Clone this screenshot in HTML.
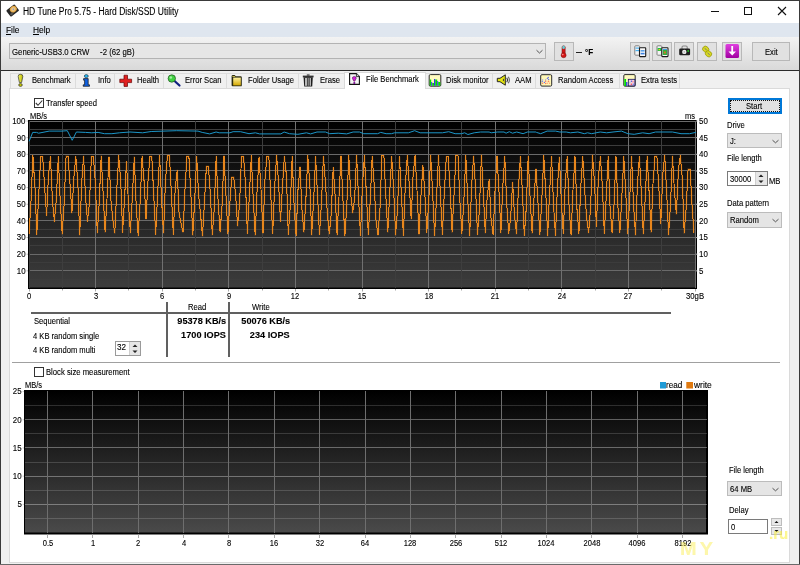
<!DOCTYPE html>
<html><head><meta charset="utf-8"><style>
html,body{margin:0;padding:0;width:800px;height:565px;overflow:hidden;background:#f0f0f0;}
body{position:relative;font-family:"Liberation Sans", sans-serif;}
.t{position:absolute;white-space:pre;line-height:1;transform-origin:0 0;font-family:"Liberation Sans", sans-serif;-webkit-text-stroke:0.12px currentColor;}
svg{position:absolute;left:0;top:0;}
</style></head><body>

<div style="position:absolute;left:0px;top:0px;width:800px;height:23px;background:#fff;"></div>
<div style="position:absolute;left:0px;top:23px;width:800px;height:14px;background:#dfe6ef;"></div>
<div style="position:absolute;left:0px;top:37px;width:800px;height:33px;background:linear-gradient(#f3f3f3,#d9d9d9);"></div>
<div style="position:absolute;left:0px;top:70px;width:800px;height:1px;background:#2b2b2b;"></div>
<div class="t" style="left:22.80px;top:6.62px;font-size:10px;transform:scaleX(0.848);color:#000;font-weight:normal;">HD Tune Pro 5.75 - Hard Disk/SSD Utility</div>
<svg width="800" height="23" style="left:0;top:0">
<line x1="711" y1="11.5" x2="719" y2="11.5" stroke="#111" stroke-width="1"/>
<rect x="744.5" y="7.5" width="7" height="7" fill="none" stroke="#111" stroke-width="1"/>
<path d="M778 7 L786 15 M786 7 L778 15" stroke="#111" stroke-width="1.1"/>
</svg>
<svg width="18" height="18" style="left:4px;top:2px" viewBox="4 2 18 18">
<defs><radialGradient id="dg" cx="0.5" cy="0.5" r="0.5"><stop offset="0.2" stop-color="#f8d8a0"/><stop offset="1" stop-color="#d89830"/></radialGradient></defs>
<g transform="rotate(-38 12.6 10.6)">
<rect x="7.4" y="6.6" width="10.6" height="8" rx="1" fill="#262626"/>
<ellipse cx="14" cy="10" rx="3.6" ry="3.2" fill="url(#dg)"/>
<circle cx="14" cy="10" r="0.9" fill="#9aa0b0"/>
<rect x="8.4" y="11.6" width="3" height="2" fill="#555"/>
</g></svg>
<div class="t" style="left:6.00px;top:24.87px;font-size:9.6px;transform:scaleX(0.8718750000000002);color:#000;font-weight:normal;">File</div>
<div class="t" style="left:32.50px;top:24.87px;font-size:9.6px;transform:scaleX(0.8718750000000002);color:#000;font-weight:normal;">Help</div>
<div style="position:absolute;left:6px;top:34px;width:5px;height:1px;background:#000;"></div>
<div style="position:absolute;left:33px;top:34px;width:6px;height:1px;background:#000;"></div>
<div style="position:absolute;left:9px;top:43px;width:537px;height:16px;box-sizing:border-box;border:1px solid #b3b3b3;background:#e6e6e6;"></div>
<div class="t" style="left:11.70px;top:46.57px;font-size:9.6px;transform:scaleX(0.8109375000000001);color:#000;font-weight:normal;">Generic-USB3.0 CRW     -2 (62 gB)</div>
<svg width="10" height="6" style="left:535px;top:48.8px"><path d="M1.5 1.2 L4.5 4 L7.5 1.2" fill="none" stroke="#444" stroke-width="0.9"/></svg>
<div style="position:absolute;left:554px;top:42px;width:20px;height:19px;box-sizing:border-box;border:1px solid #b8b8b8;background:#e1e1e1;"></div>
<svg width="20" height="19" style="left:554px;top:42px" viewBox="554 42 20 19">
<rect x="562" y="45.8" width="3.2" height="8.5" rx="1.5" fill="#d41818" stroke="#701010" stroke-width="0.5"/>
<rect x="562.3" y="45.8" width="2.6" height="3.2" rx="1.3" fill="#60d0d8"/>
<circle cx="563.6" cy="55.2" r="2.5" fill="#d41818" stroke="#701010" stroke-width="0.5"/>
<circle cx="562.8" cy="54.6" r="0.8" fill="#ff9090"/>
</svg>
<div style="position:absolute;left:576px;top:51.6px;width:6px;height:1.2px;background:#222;"></div>
<div class="t" style="left:584.50px;top:47.54px;font-size:9px;transform:scaleX(0.9);color:#000;font-weight:bold;">°F</div>
<div style="position:absolute;left:630px;top:42px;width:20px;height:19px;box-sizing:border-box;border:1px solid #b8b8b8;background:#e1e1e1;"></div>
<div style="position:absolute;left:652px;top:42px;width:20px;height:19px;box-sizing:border-box;border:1px solid #b8b8b8;background:#e1e1e1;"></div>
<div style="position:absolute;left:674px;top:42px;width:20px;height:19px;box-sizing:border-box;border:1px solid #b8b8b8;background:#e1e1e1;"></div>
<div style="position:absolute;left:697px;top:42px;width:20px;height:19px;box-sizing:border-box;border:1px solid #b8b8b8;background:#e1e1e1;"></div>
<div style="position:absolute;left:722px;top:42px;width:20px;height:19px;box-sizing:border-box;border:1px solid #b8b8b8;background:#e1e1e1;"></div>
<svg width="20" height="19" style="left:630px;top:42px" viewBox="630 42 20 19">
<rect x="634.8" y="45.8" width="4.8" height="9.4" rx="0.8" fill="#f4f4f4" stroke="#777" stroke-width="0.9"/>
<rect x="635.5" y="47.5" width="3.5" height="1.2" fill="#4ab0f0"/><rect x="635.5" y="50" width="3.5" height="1.2" fill="#4ab0f0"/>
<rect x="639.5" y="47.8" width="6.2" height="8.8" rx="0.6" fill="#fafafa" stroke="#1a1a1a" stroke-width="1.1"/>
<rect x="640.6" y="50" width="4" height="1.6" fill="#5aa0e8"/><rect x="640.6" y="52.8" width="4" height="1.6" fill="#3a80e0"/>
</svg>
<svg width="20" height="19" style="left:652px;top:42px" viewBox="652 42 20 19">
<rect x="657" y="45.8" width="4.8" height="9.4" rx="0.8" fill="#f4f4f4" stroke="#777" stroke-width="0.9"/>
<rect x="657.6" y="48" width="3.6" height="3" fill="#20c040"/><rect x="658.5" y="49" width="1.5" height="1.2" fill="#e0d020"/>
<rect x="661.8" y="47.8" width="6.2" height="8.8" rx="0.6" fill="#fafafa" stroke="#1a1a1a" stroke-width="1.1"/>
<rect x="662.8" y="50" width="4.2" height="5" fill="#30b040"/><rect x="663.8" y="51.5" width="2" height="2" fill="#e07020"/>
<rect x="662.8" y="49" width="4.2" height="1" fill="#40a0e0"/>
</svg>
<svg width="20" height="19" style="left:674px;top:42px" viewBox="674 42 20 19">
<path d="M682 49 V47.2 Q682 46 683.2 46 H686 Q687.2 46 687.2 47.2 V49" fill="none" stroke="#888" stroke-width="1.1"/>
<rect x="679.2" y="48.6" width="10.9" height="6.6" rx="1.2" fill="#1e1e1e"/>
<circle cx="684.3" cy="51.9" r="2.2" fill="#f0f0f0"/>
<circle cx="684.3" cy="51.9" r="0.9" fill="#bbb"/>
<rect x="687.4" y="50.2" width="1.6" height="1.6" fill="#20d020"/>
</svg>
<svg width="20" height="19" style="left:697px;top:42px" viewBox="697 42 20 19">
<g transform="rotate(40 707 51.3)">
<rect x="701.5" y="47.8" width="6.4" height="5.5" rx="2.6" fill="#d8d820" stroke="#8a8a00" stroke-width="0.6"/>
<rect x="706.6" y="49.5" width="6.4" height="5.5" rx="2.6" fill="#d8d820" stroke="#8a8a00" stroke-width="0.6"/>
<line x1="703.2" y1="50.5" x2="706" y2="50.5" stroke="#777" stroke-width="0.9"/>
<line x1="708.5" y1="52.2" x2="711.3" y2="52.2" stroke="#777" stroke-width="0.9"/>
</g></svg>
<svg width="20" height="19" style="left:722px;top:42px" viewBox="0 0 20 19">
<defs><linearGradient id="pg" x1="0" y1="0" x2="0" y2="1"><stop offset="0" stop-color="#e040e0"/><stop offset="1" stop-color="#a000a0"/></linearGradient></defs>
<rect x="3.5" y="2" width="13.5" height="14" rx="1.5" fill="url(#pg)"/>
<path d="M10.2 4 V12" stroke="#fff" stroke-width="1.8"/>
<path d="M6.5 9.5 L10.2 13.5 L14 9.5 Z" fill="#fff"/>
</svg>
<div style="position:absolute;left:752px;top:42px;width:38px;height:19px;box-sizing:border-box;border:1px solid #b8b8b8;background:#e1e1e1;"></div>
<div class="t" style="left:764.50px;top:46.87px;font-size:9.6px;transform:scaleX(0.796875);color:#000;font-weight:normal;">Exit</div>
<div style="position:absolute;left:9px;top:88px;width:781px;height:475px;box-sizing:border-box;border:1px solid #dadada;background:#fff;"></div>
<div style="position:absolute;left:10px;top:73px;width:65px;height:15px;box-sizing:border-box;border:1px solid #dcdcdc;border-right:none;border-bottom:none;background:#f0f0f0;"></div>
<div class="t" style="left:32.00px;top:74.97px;font-size:9.6px;transform:scaleX(0.796875);color:#000;font-weight:normal;">Benchmark</div>
<div style="position:absolute;left:75px;top:73px;width:39px;height:15px;box-sizing:border-box;border:1px solid #dcdcdc;border-right:none;border-bottom:none;background:#f0f0f0;"></div>
<div class="t" style="left:97.50px;top:74.97px;font-size:9.6px;transform:scaleX(0.796875);color:#000;font-weight:normal;">Info</div>
<div style="position:absolute;left:114px;top:73px;width:49px;height:15px;box-sizing:border-box;border:1px solid #dcdcdc;border-right:none;border-bottom:none;background:#f0f0f0;"></div>
<div class="t" style="left:137.20px;top:74.97px;font-size:9.6px;transform:scaleX(0.796875);color:#000;font-weight:normal;">Health</div>
<div style="position:absolute;left:163px;top:73px;width:63px;height:15px;box-sizing:border-box;border:1px solid #dcdcdc;border-right:none;border-bottom:none;background:#f0f0f0;"></div>
<div class="t" style="left:185.30px;top:74.97px;font-size:9.6px;transform:scaleX(0.796875);color:#000;font-weight:normal;">Error Scan</div>
<div style="position:absolute;left:226px;top:73px;width:72px;height:15px;box-sizing:border-box;border:1px solid #dcdcdc;border-right:none;border-bottom:none;background:#f0f0f0;"></div>
<div class="t" style="left:248.30px;top:74.97px;font-size:9.6px;transform:scaleX(0.796875);color:#000;font-weight:normal;">Folder Usage</div>
<div style="position:absolute;left:298px;top:73px;width:46px;height:15px;box-sizing:border-box;border:1px solid #dcdcdc;border-right:none;border-bottom:none;background:#f0f0f0;"></div>
<div class="t" style="left:320.40px;top:74.97px;font-size:9.6px;transform:scaleX(0.796875);color:#000;font-weight:normal;">Erase</div>
<div style="position:absolute;left:344px;top:72px;width:82px;height:17px;box-sizing:border-box;border:1px solid #d9d9d9;border-bottom:none;background:#fff;"></div>
<div class="t" style="left:366.00px;top:74.47px;font-size:9.6px;transform:scaleX(0.7921874999999999);color:#000;font-weight:normal;">File Benchmark</div>
<div style="position:absolute;left:425px;top:73px;width:67px;height:15px;box-sizing:border-box;border:1px solid #dcdcdc;border-right:none;border-bottom:none;background:#f0f0f0;"></div>
<div class="t" style="left:445.50px;top:74.97px;font-size:9.6px;transform:scaleX(0.796875);color:#000;font-weight:normal;">Disk monitor</div>
<div style="position:absolute;left:492px;top:73px;width:43px;height:15px;box-sizing:border-box;border:1px solid #dcdcdc;border-right:none;border-bottom:none;background:#f0f0f0;"></div>
<div class="t" style="left:514.50px;top:74.97px;font-size:9.6px;transform:scaleX(0.796875);color:#000;font-weight:normal;">AAM</div>
<div style="position:absolute;left:535px;top:73px;width:84px;height:15px;box-sizing:border-box;border:1px solid #dcdcdc;border-right:none;border-bottom:none;background:#f0f0f0;"></div>
<div class="t" style="left:557.60px;top:74.97px;font-size:9.6px;transform:scaleX(0.796875);color:#000;font-weight:normal;">Random Access</div>
<div style="position:absolute;left:619px;top:73px;width:60px;height:15px;box-sizing:border-box;border:1px solid #dcdcdc;border-right:none;border-bottom:none;background:#f0f0f0;"></div>
<div class="t" style="left:640.50px;top:74.97px;font-size:9.6px;transform:scaleX(0.796875);color:#000;font-weight:normal;">Extra tests</div>
<div style="position:absolute;left:679px;top:73px;width:1px;height:15px;background:#dcdcdc;"></div>
<svg width="800" height="20" style="left:0;top:72px" viewBox="0 72 800 20">
<defs>
<linearGradient id="yg" x1="0" y1="0" x2="1" y2="0"><stop offset="0" stop-color="#f5f560"/><stop offset="1" stop-color="#b8b800"/></linearGradient>
<linearGradient id="tg" x1="0" y1="0" x2="1" y2="0"><stop offset="0" stop-color="#555"/><stop offset="0.4" stop-color="#ddd"/><stop offset="1" stop-color="#444"/></linearGradient>
<linearGradient id="fg" x1="0" y1="0" x2="0" y2="1"><stop offset="0" stop-color="#fff2a0"/><stop offset="1" stop-color="#d4a800"/></linearGradient>
</defs>
<!-- benchmark exclamation -->
<path d="M18.2 76.5 Q18 74.3 20.5 74.3 Q23 74.3 22.8 76.5 L21.6 82.5 L19.4 82.5 Z" fill="url(#yg)" stroke="#333" stroke-width="0.7"/>
<ellipse cx="20.5" cy="85" rx="1.8" ry="1.4" fill="#c8c800" stroke="#333" stroke-width="0.7"/>
<!-- info i -->
<ellipse cx="86.3" cy="76.1" rx="2" ry="1.5" fill="#28b8f0" stroke="#123" stroke-width="0.6"/>
<path d="M83.6 78.6 H88.2 V84.8 H89.5 V86.3 H83.2 V84.8 H84.6 V80.2 H83.6 Z" fill="#1060e0" stroke="#111" stroke-width="0.7"/>
<!-- health cross -->
<path d="M124 75.2 H127.5 V79.2 H131.6 V82.6 H127.5 V86.4 H124 V82.6 H119.8 V79.2 H124 Z" fill="#e02020" stroke="#600" stroke-width="0.7"/>
<!-- error scan magnifier -->
<line x1="174" y1="80.5" x2="179.5" y2="85.5" stroke="#102080" stroke-width="2.2" stroke-linecap="round"/>
<circle cx="171.8" cy="78.5" r="3.7" fill="#40d040" stroke="#205020" stroke-width="0.7"/>
<circle cx="170.8" cy="77.5" r="1.3" fill="#a0f0a0"/>
<!-- folder -->
<path d="M231.6 76.2 Q231.6 74.9 233 74.9 L234.6 74.9 L235.8 76.2 L240.6 76.2 Q241.8 76.2 241.8 77.5 L241.8 85.4 Q241.8 86.3 240.8 86.3 L232.6 86.3 Q231.6 86.3 231.6 85.3 Z" fill="#2a2a10" />
<path d="M232.4 76.2 L234.8 76.2 L235.4 77 L232.4 77 Z" fill="#f0e060"/>
<rect x="233.2" y="77.6" width="7.6" height="7.8" fill="url(#fg)"/>
<!-- trash -->
<path d="M302.8 75.6 H313.6 V77.4 H302.8 Z" fill="#333"/>
<rect x="306.8" y="74.3" width="2.8" height="1.6" fill="#555"/>
<path d="M303.6 77.3 H312.8 L312.2 86.4 H304.2 Z" fill="#1e1e1e"/>
<rect x="305.2" y="78" width="1.6" height="7.8" fill="#e0e0e0"/>
<rect x="307.6" y="78" width="1.2" height="7.8" fill="#9a9a9a"/>
<rect x="309.6" y="78" width="1.3" height="7.8" fill="#c8c8c8"/>
<!-- file benchmark doc -->
<path d="M349.6 73.6 H356.4 L359.4 76.6 V84.4 H349.6 Z" fill="#f6f6f6" stroke="#111" stroke-width="1.1"/>
<path d="M356.4 73.6 V76.6 H359.4" fill="#ccc" stroke="#111" stroke-width="0.8"/>
<path d="M354.3 76.4 Q356.6 76.6 356.2 78.4 L354.8 81.2 H353.8 L352.4 78.4 Q352 76.6 354.3 76.4 Z" fill="#d020d8" stroke="#401040" stroke-width="0.5"/>
<ellipse cx="354.3" cy="83" rx="1.1" ry="0.9" fill="#7a0a90"/>
<!-- disk monitor -->
<rect x="429.2" y="74.6" width="11.6" height="11.6" rx="1.2" fill="#fffbc0" stroke="#2a2a2a" stroke-width="1"/>
<path d="M429.7 79.5 H431.2 V85.7 H429.7 Z M432.2 83 H434 V85.7 H432.2 Z M435.2 79.5 H437.2 V85.7 H435.2 Z M438.2 82 H440.3 V85.7 H438.2 Z" fill="#00e000"/>
<path d="M431.2 82 H432.2 V85.7 H431.2 Z M434 79 H435.2 V85.7 H434 Z M437.2 81 H438.2 V85.7 H437.2 Z" fill="#3535e8"/>
<!-- AAM speaker -->
<path d="M497.3 78.3 H500 L505.3 74.8 V85.2 L500 81.7 H497.3 Z" fill="#e4e410" stroke="#222" stroke-width="1"/>
<ellipse cx="503.5" cy="80" rx="0.6" ry="1.2" fill="#444"/>
<path d="M506.8 77.8 Q508.3 80 506.8 82.2" fill="none" stroke="#333" stroke-width="1.1"/>
<path d="M508.3 76.8 Q510.5 80 508.3 83.2" fill="none" stroke="#666" stroke-width="1.1"/>
<!-- random access -->
<rect x="540.7" y="74.7" width="11" height="11.4" rx="1.2" fill="#fff8b8" stroke="#2a2a2a" stroke-width="1"/>
<rect x="542.3" y="79" width="0.8" height="3" fill="#9aa0f0"/><rect x="545.3" y="79" width="0.8" height="3" fill="#9aa0f0"/>
<circle cx="548.3" cy="77.4" r="0.7" fill="#6670e8"/><circle cx="547.4" cy="78.4" r="0.7" fill="#6670e8"/><circle cx="548.6" cy="79.4" r="0.7" fill="#6670e8"/>
<circle cx="544.4" cy="82.4" r="0.7" fill="#6670e8"/><circle cx="542.2" cy="81.5" r="0.6" fill="#6670e8"/>
<circle cx="542.6" cy="83.3" r="0.8" fill="#ff8060"/><circle cx="545.6" cy="81.2" r="0.8" fill="#ff8060"/>
<circle cx="545.6" cy="83.5" r="0.8" fill="#ff8060"/><circle cx="548.5" cy="81.4" r="0.8" fill="#ff8060"/>
<circle cx="547.2" cy="83.3" r="0.7" fill="#ff9a70"/><circle cx="549.5" cy="83.2" r="0.7" fill="#ff9a70"/>
<!-- extra tests -->
<rect x="623.8" y="74.6" width="11.4" height="11.6" rx="1.2" fill="#fffbc0" stroke="#2a2a2a" stroke-width="1"/>
<rect x="624.3" y="79" width="1.8" height="7" fill="#00e000"/>
<rect x="626.1" y="82" width="1.3" height="4" fill="#3535e8"/>
<rect x="628.3" y="79.3" width="6.6" height="6.6" fill="#f4d0e0" stroke="#101060" stroke-width="0.8"/>
<circle cx="631.5" cy="81.2" r="0.8" fill="#4a60f0"/><circle cx="629.8" cy="82.6" r="0.8" fill="#a0f0b0"/>
<circle cx="631.4" cy="84.3" r="0.8" fill="#ff5050"/><circle cx="633.3" cy="84.3" r="0.8" fill="#6a80f0"/><circle cx="633" cy="81.8" r="0.7" fill="#ff8080"/>
</svg>
<div style="position:absolute;left:34px;top:98px;width:10px;height:10px;box-sizing:border-box;border:1px solid #333;background:#fff;"></div>
<svg width="10" height="10" style="left:34px;top:98px"><path d="M1.8 5 L4 7.3 L8.3 2.5" fill="none" stroke="#333" stroke-width="1.1"/></svg>
<div class="t" style="left:46.00px;top:97.87px;font-size:9.6px;transform:scaleX(0.7940625);color:#000;font-weight:normal;">Transfer speed</div>
<svg width="800" height="300" style="left:0;top:0">
<defs><linearGradient id="bg1" x1="0" y1="0" x2="0" y2="1"><stop offset="0" stop-color="#000"/><stop offset="1" stop-color="#3d3d3d"/></linearGradient><linearGradient id="bg2unused" x1="0" y1="0" x2="0" y2="1"><stop offset="0" stop-color="#000"/><stop offset="1" stop-color="#4a4a4a"/></linearGradient></defs>
<rect x="28" y="120" width="669" height="169" fill="#000"/>
<rect x="29" y="121" width="666" height="166.5" fill="url(#bg1)"/>
<line x1="29" y1="279.50" x2="696" y2="279.50" stroke="#3c3c3c" stroke-width="1"/>
<line x1="29" y1="270.50" x2="696" y2="270.50" stroke="#6a6a6a" stroke-width="1"/>
<line x1="29" y1="262.50" x2="696" y2="262.50" stroke="#3c3c3c" stroke-width="1"/>
<line x1="29" y1="254.50" x2="696" y2="254.50" stroke="#6a6a6a" stroke-width="1"/>
<line x1="29" y1="245.50" x2="696" y2="245.50" stroke="#3c3c3c" stroke-width="1"/>
<line x1="29" y1="237.50" x2="696" y2="237.50" stroke="#6a6a6a" stroke-width="1"/>
<line x1="29" y1="229.50" x2="696" y2="229.50" stroke="#3c3c3c" stroke-width="1"/>
<line x1="29" y1="220.50" x2="696" y2="220.50" stroke="#6a6a6a" stroke-width="1"/>
<line x1="29" y1="212.50" x2="696" y2="212.50" stroke="#3c3c3c" stroke-width="1"/>
<line x1="29" y1="204.50" x2="696" y2="204.50" stroke="#6a6a6a" stroke-width="1"/>
<line x1="29" y1="195.50" x2="696" y2="195.50" stroke="#3c3c3c" stroke-width="1"/>
<line x1="29" y1="187.50" x2="696" y2="187.50" stroke="#6a6a6a" stroke-width="1"/>
<line x1="29" y1="179.50" x2="696" y2="179.50" stroke="#3c3c3c" stroke-width="1"/>
<line x1="29" y1="170.50" x2="696" y2="170.50" stroke="#6a6a6a" stroke-width="1"/>
<line x1="29" y1="162.50" x2="696" y2="162.50" stroke="#3c3c3c" stroke-width="1"/>
<line x1="29" y1="154.50" x2="696" y2="154.50" stroke="#6a6a6a" stroke-width="1"/>
<line x1="29" y1="145.50" x2="696" y2="145.50" stroke="#3c3c3c" stroke-width="1"/>
<line x1="29" y1="137.50" x2="696" y2="137.50" stroke="#6a6a6a" stroke-width="1"/>
<line x1="29" y1="129.50" x2="696" y2="129.50" stroke="#3c3c3c" stroke-width="1"/>
<line x1="29" y1="121.50" x2="696" y2="121.50" stroke="#6a6a6a" stroke-width="1"/>
<line x1="29.50" y1="121" x2="29.50" y2="288" stroke="#3e3e3e" stroke-width="1"/>
<line x1="62.50" y1="121" x2="62.50" y2="288" stroke="#3e3e3e" stroke-width="1"/>
<line x1="95.50" y1="121" x2="95.50" y2="288" stroke="#707070" stroke-width="1"/>
<line x1="128.50" y1="121" x2="128.50" y2="288" stroke="#3e3e3e" stroke-width="1"/>
<line x1="162.50" y1="121" x2="162.50" y2="288" stroke="#707070" stroke-width="1"/>
<line x1="195.50" y1="121" x2="195.50" y2="288" stroke="#3e3e3e" stroke-width="1"/>
<line x1="228.50" y1="121" x2="228.50" y2="288" stroke="#707070" stroke-width="1"/>
<line x1="262.50" y1="121" x2="262.50" y2="288" stroke="#3e3e3e" stroke-width="1"/>
<line x1="295.50" y1="121" x2="295.50" y2="288" stroke="#707070" stroke-width="1"/>
<line x1="328.50" y1="121" x2="328.50" y2="288" stroke="#3e3e3e" stroke-width="1"/>
<line x1="362.50" y1="121" x2="362.50" y2="288" stroke="#707070" stroke-width="1"/>
<line x1="395.50" y1="121" x2="395.50" y2="288" stroke="#3e3e3e" stroke-width="1"/>
<line x1="428.50" y1="121" x2="428.50" y2="288" stroke="#707070" stroke-width="1"/>
<line x1="461.50" y1="121" x2="461.50" y2="288" stroke="#3e3e3e" stroke-width="1"/>
<line x1="495.50" y1="121" x2="495.50" y2="288" stroke="#707070" stroke-width="1"/>
<line x1="528.50" y1="121" x2="528.50" y2="288" stroke="#3e3e3e" stroke-width="1"/>
<line x1="561.50" y1="121" x2="561.50" y2="288" stroke="#707070" stroke-width="1"/>
<line x1="595.50" y1="121" x2="595.50" y2="288" stroke="#3e3e3e" stroke-width="1"/>
<line x1="628.50" y1="121" x2="628.50" y2="288" stroke="#707070" stroke-width="1"/>
<line x1="661.50" y1="121" x2="661.50" y2="288" stroke="#3e3e3e" stroke-width="1"/>
<line x1="695.50" y1="121" x2="695.50" y2="288" stroke="#707070" stroke-width="1"/>
<line x1="26.5" y1="270.85" x2="28" y2="270.85" stroke="#bbb" stroke-width="1"/>
<line x1="696" y1="270.85" x2="697.5" y2="270.85" stroke="#bbb" stroke-width="1"/>
<line x1="26.5" y1="254.20" x2="28" y2="254.20" stroke="#bbb" stroke-width="1"/>
<line x1="696" y1="254.20" x2="697.5" y2="254.20" stroke="#bbb" stroke-width="1"/>
<line x1="26.5" y1="237.55" x2="28" y2="237.55" stroke="#bbb" stroke-width="1"/>
<line x1="696" y1="237.55" x2="697.5" y2="237.55" stroke="#bbb" stroke-width="1"/>
<line x1="26.5" y1="220.90" x2="28" y2="220.90" stroke="#bbb" stroke-width="1"/>
<line x1="696" y1="220.90" x2="697.5" y2="220.90" stroke="#bbb" stroke-width="1"/>
<line x1="26.5" y1="204.25" x2="28" y2="204.25" stroke="#bbb" stroke-width="1"/>
<line x1="696" y1="204.25" x2="697.5" y2="204.25" stroke="#bbb" stroke-width="1"/>
<line x1="26.5" y1="187.60" x2="28" y2="187.60" stroke="#bbb" stroke-width="1"/>
<line x1="696" y1="187.60" x2="697.5" y2="187.60" stroke="#bbb" stroke-width="1"/>
<line x1="26.5" y1="170.95" x2="28" y2="170.95" stroke="#bbb" stroke-width="1"/>
<line x1="696" y1="170.95" x2="697.5" y2="170.95" stroke="#bbb" stroke-width="1"/>
<line x1="26.5" y1="154.30" x2="28" y2="154.30" stroke="#bbb" stroke-width="1"/>
<line x1="696" y1="154.30" x2="697.5" y2="154.30" stroke="#bbb" stroke-width="1"/>
<line x1="26.5" y1="137.65" x2="28" y2="137.65" stroke="#bbb" stroke-width="1"/>
<line x1="696" y1="137.65" x2="697.5" y2="137.65" stroke="#bbb" stroke-width="1"/>
<line x1="26.5" y1="121.00" x2="28" y2="121.00" stroke="#bbb" stroke-width="1"/>
<line x1="696" y1="121.00" x2="697.5" y2="121.00" stroke="#bbb" stroke-width="1"/>
<line x1="29.50" y1="289" x2="29.50" y2="291.5" stroke="#aaa" stroke-width="1"/>
<line x1="62.50" y1="289" x2="62.50" y2="290.5" stroke="#aaa" stroke-width="1"/>
<line x1="95.50" y1="289" x2="95.50" y2="291.5" stroke="#aaa" stroke-width="1"/>
<line x1="128.50" y1="289" x2="128.50" y2="290.5" stroke="#aaa" stroke-width="1"/>
<line x1="162.50" y1="289" x2="162.50" y2="291.5" stroke="#aaa" stroke-width="1"/>
<line x1="195.50" y1="289" x2="195.50" y2="290.5" stroke="#aaa" stroke-width="1"/>
<line x1="228.50" y1="289" x2="228.50" y2="291.5" stroke="#aaa" stroke-width="1"/>
<line x1="262.50" y1="289" x2="262.50" y2="290.5" stroke="#aaa" stroke-width="1"/>
<line x1="295.50" y1="289" x2="295.50" y2="291.5" stroke="#aaa" stroke-width="1"/>
<line x1="328.50" y1="289" x2="328.50" y2="290.5" stroke="#aaa" stroke-width="1"/>
<line x1="362.50" y1="289" x2="362.50" y2="291.5" stroke="#aaa" stroke-width="1"/>
<line x1="395.50" y1="289" x2="395.50" y2="290.5" stroke="#aaa" stroke-width="1"/>
<line x1="428.50" y1="289" x2="428.50" y2="291.5" stroke="#aaa" stroke-width="1"/>
<line x1="461.50" y1="289" x2="461.50" y2="290.5" stroke="#aaa" stroke-width="1"/>
<line x1="495.50" y1="289" x2="495.50" y2="291.5" stroke="#aaa" stroke-width="1"/>
<line x1="528.50" y1="289" x2="528.50" y2="290.5" stroke="#aaa" stroke-width="1"/>
<line x1="561.50" y1="289" x2="561.50" y2="291.5" stroke="#aaa" stroke-width="1"/>
<line x1="595.50" y1="289" x2="595.50" y2="290.5" stroke="#aaa" stroke-width="1"/>
<line x1="628.50" y1="289" x2="628.50" y2="291.5" stroke="#aaa" stroke-width="1"/>
<line x1="661.50" y1="289" x2="661.50" y2="290.5" stroke="#aaa" stroke-width="1"/>
<line x1="695.50" y1="289" x2="695.50" y2="291.5" stroke="#aaa" stroke-width="1"/>
<polyline points="29.1,141.3 32.7,132.4 36.5,132.4 38.6,133.2 49.2,131.1 62.0,131.1 67.3,130.7 72.2,140.3 76.4,132.0 85.4,132.4 91.7,132.8 98.1,132.4 104.5,133.7 111.9,133.7 119.4,132.8 130.0,132.0 142.7,132.8 151.2,131.5 164.0,131.1 176.7,130.7 198.0,131.1 202.2,132.4 209.7,133.9 216.1,132.0 219.2,132.8 229.9,132.8 233.1,131.7 240.5,131.7 249.0,133.7 255.4,132.8 259.6,133.9 280.9,133.9 284.1,132.0 289.4,133.7 297.9,134.3 306.4,132.8 310.6,133.9 317.0,132.0 325.5,132.0 329.7,133.7 338.2,133.2 346.7,133.9 353.1,132.0 359.5,132.0 363.7,133.7 368.0,133.7 377.6,133.7 380.7,132.4 386.1,133.7 391.4,133.7 394.6,132.8 408.4,132.8 414.7,130.7 420.1,132.8 442.4,132.8 448.7,131.7 455.1,133.7 461.5,133.7 464.7,132.8 467.9,134.5 474.2,132.8 480.6,132.0 489.1,132.0 491.2,132.8 497.6,132.0 504.0,132.0 506.1,133.2 509.3,131.7 512.5,133.2 516.7,132.0 523.1,133.7 527.4,132.0 535.9,132.0 536.5,132.4 540.7,133.7 547.1,131.1 555.6,131.1 559.9,132.0 566.2,132.0 570.5,132.8 577.9,132.0 584.3,133.7 587.5,132.8 591.7,133.7 600.2,132.0 606.6,132.8 613.0,132.0 621.5,131.1 627.9,133.7 634.2,134.3 642.7,132.8 649.1,133.7 655.5,132.0 672.5,132.0 681.0,133.7 689.5,133.7 695.9,132.4" fill="none" stroke="#1c96c8" stroke-width="1" stroke-linejoin="round"/>
<polyline points="29.0,233.9 30.9,203.3 32.9,155.8 34.9,185.6 36.8,234.3 38.8,192.9 40.7,156.7 42.7,156.7 44.6,186.7 46.6,215.3 48.5,174.9 50.5,157.0 52.4,200.1 54.4,221.4 56.3,199.5 58.3,156.9 60.2,200.4 62.2,233.9 64.1,204.3 66.1,156.0 68.0,156.0 70.0,184.0 71.9,212.7 73.9,177.1 75.8,156.7 77.8,182.3 79.7,235.0 81.7,182.9 83.6,156.2 85.6,198.3 87.5,221.1 89.5,202.9 91.4,156.4 93.4,156.4 95.3,182.2 97.3,232.8 99.2,202.8 101.2,156.1 103.1,192.8 105.1,232.0 107.0,199.0 109.0,156.8 110.9,200.2 112.9,220.0 114.8,233.0 116.8,189.0 118.7,155.6 120.7,180.6 122.6,232.2 124.6,197.3 126.5,161.9 128.5,204.6 130.4,232.7 132.4,195.3 134.3,157.0 136.3,208.2 138.2,235.6 140.2,200.8 142.1,156.3 144.1,181.5 146.0,218.8 148.0,180.9 149.9,156.6 151.8,156.6 153.8,196.3 155.7,234.1 157.7,192.3 159.6,155.4 161.6,200.5 163.5,233.0 165.5,180.7 167.4,155.6 169.4,155.6 171.3,191.5 173.3,234.2 175.2,188.7 177.2,170.6 179.1,213.4 181.1,223.8 183.0,232.3 185.0,189.6 186.9,156.2 188.9,156.2 190.8,193.1 192.8,235.1 194.7,199.6 196.7,156.7 198.6,194.4 200.6,215.0 202.5,235.9 204.5,202.1 206.4,166.2 208.4,166.2 210.3,193.1 212.3,234.6 214.2,209.3 216.2,156.6 218.1,201.3 220.1,231.9 222.0,206.1 224.0,156.1 225.9,193.8 227.9,233.7 229.8,203.5 231.8,177.0 233.7,177.0 235.7,195.9 237.6,225.8 239.6,203.8 241.5,156.5 243.5,156.5 245.4,181.7 247.4,233.2 249.3,196.3 251.3,155.9 253.2,197.9 255.2,234.9 257.1,189.8 259.1,157.0 261.0,189.2 263.0,233.3 264.9,180.9 266.9,156.4 268.8,156.4 270.8,195.4 272.7,233.3 274.7,186.6 276.6,155.4 278.6,183.6 280.5,221.1 282.5,185.4 284.4,156.6 286.4,175.0 288.3,234.3 290.3,206.0 292.2,156.5 294.2,208.0 296.1,235.4 298.1,187.5 300.0,167.0 302.0,210.0 303.9,231.9 305.9,199.2 307.8,155.8 309.8,183.5 311.7,234.7 313.7,199.4 315.6,156.7 317.6,196.7 319.5,234.3 321.5,202.2 323.4,156.6 325.4,181.6 327.3,213.2 329.3,233.8 331.2,214.6 333.2,167.8 335.1,194.8 337.1,234.6 339.0,196.7 341.0,156.0 342.9,199.2 344.9,235.7 346.8,204.9 348.8,155.5 350.7,194.0 352.7,212.8 354.6,198.6 356.6,155.4 358.5,196.7 360.5,235.6 362.4,186.2 364.4,155.6 366.3,192.0 368.3,234.4 370.2,201.5 372.2,156.5 374.1,183.7 376.1,221.9 378.0,234.8 380.0,208.5 381.9,155.8 383.9,155.8 385.8,195.4 387.8,232.0 389.7,193.3 391.7,156.8 393.6,188.7 395.6,235.0 397.5,209.8 399.5,157.0 401.4,195.0 403.4,235.2 405.3,184.9 407.3,155.7 409.2,183.3 411.2,218.7 413.1,174.9 415.1,155.6 417.0,190.4 419.0,234.4 420.9,196.7 422.9,165.8 424.8,192.4 426.8,232.2 428.7,202.5 430.7,155.3 432.6,192.1 434.6,235.5 436.5,198.3 438.5,155.4 440.4,194.3 442.4,234.1 444.3,193.1 446.3,156.9 448.2,156.9 450.2,190.5 452.1,232.2 454.1,193.3 456.0,155.3 458.0,155.3 459.9,201.5 461.9,233.2 463.8,201.8 465.8,155.6 467.7,198.0 469.7,235.7 471.6,186.2 473.6,156.1 475.5,186.8 477.5,234.2 479.4,209.6 481.4,155.1 483.3,192.3 485.3,232.8 487.2,196.9 489.2,179.7 491.1,219.6 493.1,234.3 495.0,191.3 497.0,156.1 498.9,189.4 500.9,232.6 502.8,185.7 504.8,156.4 506.7,203.5 508.7,233.2 510.6,218.5 512.6,182.5 514.5,214.9 516.5,233.8 518.4,188.9 520.4,156.7 522.3,189.7 524.3,235.3 526.2,209.1 528.2,156.4 530.1,198.4 532.1,232.9 534.0,198.1 536.0,169.0 537.9,200.9 539.9,234.4 541.8,199.7 543.8,155.9 545.7,191.0 547.7,235.8 549.6,192.0 551.6,156.7 553.5,204.6 555.5,235.2 557.4,187.1 559.4,157.0 561.3,201.2 563.3,233.3 565.2,184.6 567.2,156.8 569.1,206.7 571.1,235.0 573.0,189.7 575.0,156.3 576.9,208.1 578.9,233.5 580.8,185.7 582.8,156.9 584.7,190.3 586.7,218.5 588.6,232.6 590.6,207.9 592.5,155.3 594.5,182.2 596.4,226.2 598.4,177.6 600.4,156.8 602.3,184.9 604.3,233.2 606.2,198.1 608.2,156.4 610.1,208.2 612.1,232.7 614.0,205.1 616.0,156.5 617.9,206.2 619.9,232.3 621.8,196.7 623.8,156.7 625.7,190.6 627.7,233.8 629.6,201.0 631.6,156.4 633.5,204.5 635.5,235.0 637.4,184.8 639.4,156.7 641.3,190.9 643.3,233.7 645.2,198.7 647.2,156.2 649.1,192.1 651.1,232.2 653.0,183.8 655.0,156.2 656.9,156.2 658.9,188.8 660.8,223.5 662.8,174.4 664.7,155.2 666.7,192.9 668.6,234.7 670.6,202.5 672.5,156.3 674.5,192.2 676.4,213.9 678.4,170.3 680.3,155.4 682.3,178.6 684.2,233.1 686.2,207.2 688.1,169.0 690.1,169.0 692.0,204.5 694.0,232.7" fill="none" stroke="#d87c1a" stroke-width="2" stroke-opacity="0.22" stroke-linejoin="round"/>
<polyline points="29.0,233.9 30.9,203.3 32.9,155.8 34.9,185.6 36.8,234.3 38.8,192.9 40.7,156.7 42.7,156.7 44.6,186.7 46.6,215.3 48.5,174.9 50.5,157.0 52.4,200.1 54.4,221.4 56.3,199.5 58.3,156.9 60.2,200.4 62.2,233.9 64.1,204.3 66.1,156.0 68.0,156.0 70.0,184.0 71.9,212.7 73.9,177.1 75.8,156.7 77.8,182.3 79.7,235.0 81.7,182.9 83.6,156.2 85.6,198.3 87.5,221.1 89.5,202.9 91.4,156.4 93.4,156.4 95.3,182.2 97.3,232.8 99.2,202.8 101.2,156.1 103.1,192.8 105.1,232.0 107.0,199.0 109.0,156.8 110.9,200.2 112.9,220.0 114.8,233.0 116.8,189.0 118.7,155.6 120.7,180.6 122.6,232.2 124.6,197.3 126.5,161.9 128.5,204.6 130.4,232.7 132.4,195.3 134.3,157.0 136.3,208.2 138.2,235.6 140.2,200.8 142.1,156.3 144.1,181.5 146.0,218.8 148.0,180.9 149.9,156.6 151.8,156.6 153.8,196.3 155.7,234.1 157.7,192.3 159.6,155.4 161.6,200.5 163.5,233.0 165.5,180.7 167.4,155.6 169.4,155.6 171.3,191.5 173.3,234.2 175.2,188.7 177.2,170.6 179.1,213.4 181.1,223.8 183.0,232.3 185.0,189.6 186.9,156.2 188.9,156.2 190.8,193.1 192.8,235.1 194.7,199.6 196.7,156.7 198.6,194.4 200.6,215.0 202.5,235.9 204.5,202.1 206.4,166.2 208.4,166.2 210.3,193.1 212.3,234.6 214.2,209.3 216.2,156.6 218.1,201.3 220.1,231.9 222.0,206.1 224.0,156.1 225.9,193.8 227.9,233.7 229.8,203.5 231.8,177.0 233.7,177.0 235.7,195.9 237.6,225.8 239.6,203.8 241.5,156.5 243.5,156.5 245.4,181.7 247.4,233.2 249.3,196.3 251.3,155.9 253.2,197.9 255.2,234.9 257.1,189.8 259.1,157.0 261.0,189.2 263.0,233.3 264.9,180.9 266.9,156.4 268.8,156.4 270.8,195.4 272.7,233.3 274.7,186.6 276.6,155.4 278.6,183.6 280.5,221.1 282.5,185.4 284.4,156.6 286.4,175.0 288.3,234.3 290.3,206.0 292.2,156.5 294.2,208.0 296.1,235.4 298.1,187.5 300.0,167.0 302.0,210.0 303.9,231.9 305.9,199.2 307.8,155.8 309.8,183.5 311.7,234.7 313.7,199.4 315.6,156.7 317.6,196.7 319.5,234.3 321.5,202.2 323.4,156.6 325.4,181.6 327.3,213.2 329.3,233.8 331.2,214.6 333.2,167.8 335.1,194.8 337.1,234.6 339.0,196.7 341.0,156.0 342.9,199.2 344.9,235.7 346.8,204.9 348.8,155.5 350.7,194.0 352.7,212.8 354.6,198.6 356.6,155.4 358.5,196.7 360.5,235.6 362.4,186.2 364.4,155.6 366.3,192.0 368.3,234.4 370.2,201.5 372.2,156.5 374.1,183.7 376.1,221.9 378.0,234.8 380.0,208.5 381.9,155.8 383.9,155.8 385.8,195.4 387.8,232.0 389.7,193.3 391.7,156.8 393.6,188.7 395.6,235.0 397.5,209.8 399.5,157.0 401.4,195.0 403.4,235.2 405.3,184.9 407.3,155.7 409.2,183.3 411.2,218.7 413.1,174.9 415.1,155.6 417.0,190.4 419.0,234.4 420.9,196.7 422.9,165.8 424.8,192.4 426.8,232.2 428.7,202.5 430.7,155.3 432.6,192.1 434.6,235.5 436.5,198.3 438.5,155.4 440.4,194.3 442.4,234.1 444.3,193.1 446.3,156.9 448.2,156.9 450.2,190.5 452.1,232.2 454.1,193.3 456.0,155.3 458.0,155.3 459.9,201.5 461.9,233.2 463.8,201.8 465.8,155.6 467.7,198.0 469.7,235.7 471.6,186.2 473.6,156.1 475.5,186.8 477.5,234.2 479.4,209.6 481.4,155.1 483.3,192.3 485.3,232.8 487.2,196.9 489.2,179.7 491.1,219.6 493.1,234.3 495.0,191.3 497.0,156.1 498.9,189.4 500.9,232.6 502.8,185.7 504.8,156.4 506.7,203.5 508.7,233.2 510.6,218.5 512.6,182.5 514.5,214.9 516.5,233.8 518.4,188.9 520.4,156.7 522.3,189.7 524.3,235.3 526.2,209.1 528.2,156.4 530.1,198.4 532.1,232.9 534.0,198.1 536.0,169.0 537.9,200.9 539.9,234.4 541.8,199.7 543.8,155.9 545.7,191.0 547.7,235.8 549.6,192.0 551.6,156.7 553.5,204.6 555.5,235.2 557.4,187.1 559.4,157.0 561.3,201.2 563.3,233.3 565.2,184.6 567.2,156.8 569.1,206.7 571.1,235.0 573.0,189.7 575.0,156.3 576.9,208.1 578.9,233.5 580.8,185.7 582.8,156.9 584.7,190.3 586.7,218.5 588.6,232.6 590.6,207.9 592.5,155.3 594.5,182.2 596.4,226.2 598.4,177.6 600.4,156.8 602.3,184.9 604.3,233.2 606.2,198.1 608.2,156.4 610.1,208.2 612.1,232.7 614.0,205.1 616.0,156.5 617.9,206.2 619.9,232.3 621.8,196.7 623.8,156.7 625.7,190.6 627.7,233.8 629.6,201.0 631.6,156.4 633.5,204.5 635.5,235.0 637.4,184.8 639.4,156.7 641.3,190.9 643.3,233.7 645.2,198.7 647.2,156.2 649.1,192.1 651.1,232.2 653.0,183.8 655.0,156.2 656.9,156.2 658.9,188.8 660.8,223.5 662.8,174.4 664.7,155.2 666.7,192.9 668.6,234.7 670.6,202.5 672.5,156.3 674.5,192.2 676.4,213.9 678.4,170.3 680.3,155.4 682.3,178.6 684.2,233.1 686.2,207.2 688.1,169.0 690.1,169.0 692.0,204.5 694.0,232.7" fill="none" stroke="#e8861c" stroke-width="1" stroke-linejoin="round" shape-rendering="crispEdges"/>
</svg>
<div class="t" style="left:29.80px;top:111.87px;font-size:8.8px;transform:scaleX(0.85);color:#000;font-weight:normal;">MB/s</div>
<div class="t" style="left:685.00px;top:111.87px;font-size:8.8px;transform:scaleX(0.85);color:#000;font-weight:normal;">ms</div>
<div class="t" style="right:774.40px;top:266.74px;font-size:8.6px;transform-origin:100% 0;transform:scaleX(0.92);color:#000;font-weight:normal">10</div>
<div class="t" style="right:774.40px;top:250.09px;font-size:8.6px;transform-origin:100% 0;transform:scaleX(0.92);color:#000;font-weight:normal">20</div>
<div class="t" style="right:774.40px;top:233.44px;font-size:8.6px;transform-origin:100% 0;transform:scaleX(0.92);color:#000;font-weight:normal">30</div>
<div class="t" style="right:774.40px;top:216.79px;font-size:8.6px;transform-origin:100% 0;transform:scaleX(0.92);color:#000;font-weight:normal">40</div>
<div class="t" style="right:774.40px;top:200.14px;font-size:8.6px;transform-origin:100% 0;transform:scaleX(0.92);color:#000;font-weight:normal">50</div>
<div class="t" style="right:774.40px;top:183.49px;font-size:8.6px;transform-origin:100% 0;transform:scaleX(0.92);color:#000;font-weight:normal">60</div>
<div class="t" style="right:774.40px;top:166.84px;font-size:8.6px;transform-origin:100% 0;transform:scaleX(0.92);color:#000;font-weight:normal">70</div>
<div class="t" style="right:774.40px;top:150.19px;font-size:8.6px;transform-origin:100% 0;transform:scaleX(0.92);color:#000;font-weight:normal">80</div>
<div class="t" style="right:774.40px;top:133.54px;font-size:8.6px;transform-origin:100% 0;transform:scaleX(0.92);color:#000;font-weight:normal">90</div>
<div class="t" style="right:774.40px;top:116.89px;font-size:8.6px;transform-origin:100% 0;transform:scaleX(0.92);color:#000;font-weight:normal">100</div>
<div class="t" style="left:699.00px;top:266.74px;font-size:8.6px;transform:scaleX(0.92);color:#000;font-weight:normal;">5</div>
<div class="t" style="left:699.00px;top:250.09px;font-size:8.6px;transform:scaleX(0.92);color:#000;font-weight:normal;">10</div>
<div class="t" style="left:699.00px;top:233.44px;font-size:8.6px;transform:scaleX(0.92);color:#000;font-weight:normal;">15</div>
<div class="t" style="left:699.00px;top:216.79px;font-size:8.6px;transform:scaleX(0.92);color:#000;font-weight:normal;">20</div>
<div class="t" style="left:699.00px;top:200.14px;font-size:8.6px;transform:scaleX(0.92);color:#000;font-weight:normal;">25</div>
<div class="t" style="left:699.00px;top:183.49px;font-size:8.6px;transform:scaleX(0.92);color:#000;font-weight:normal;">30</div>
<div class="t" style="left:699.00px;top:166.84px;font-size:8.6px;transform:scaleX(0.92);color:#000;font-weight:normal;">35</div>
<div class="t" style="left:699.00px;top:150.19px;font-size:8.6px;transform:scaleX(0.92);color:#000;font-weight:normal;">40</div>
<div class="t" style="left:699.00px;top:133.54px;font-size:8.6px;transform:scaleX(0.92);color:#000;font-weight:normal;">45</div>
<div class="t" style="left:699.00px;top:116.89px;font-size:8.6px;transform:scaleX(0.92);color:#000;font-weight:normal;">50</div>
<div class="t" style="left:-71.00px;width:200px;text-align:center;top:291.59px;font-size:8.6px;transform-origin:50% 0;transform:scaleX(0.88);color:#000;font-weight:normal">0</div>
<div class="t" style="left:-4.40px;width:200px;text-align:center;top:291.59px;font-size:8.6px;transform-origin:50% 0;transform:scaleX(0.88);color:#000;font-weight:normal">3</div>
<div class="t" style="left:62.20px;width:200px;text-align:center;top:291.59px;font-size:8.6px;transform-origin:50% 0;transform:scaleX(0.88);color:#000;font-weight:normal">6</div>
<div class="t" style="left:128.80px;width:200px;text-align:center;top:291.59px;font-size:8.6px;transform-origin:50% 0;transform:scaleX(0.88);color:#000;font-weight:normal">9</div>
<div class="t" style="left:195.40px;width:200px;text-align:center;top:291.59px;font-size:8.6px;transform-origin:50% 0;transform:scaleX(0.88);color:#000;font-weight:normal">12</div>
<div class="t" style="left:262.00px;width:200px;text-align:center;top:291.59px;font-size:8.6px;transform-origin:50% 0;transform:scaleX(0.88);color:#000;font-weight:normal">15</div>
<div class="t" style="left:328.60px;width:200px;text-align:center;top:291.59px;font-size:8.6px;transform-origin:50% 0;transform:scaleX(0.88);color:#000;font-weight:normal">18</div>
<div class="t" style="left:395.20px;width:200px;text-align:center;top:291.59px;font-size:8.6px;transform-origin:50% 0;transform:scaleX(0.88);color:#000;font-weight:normal">21</div>
<div class="t" style="left:461.80px;width:200px;text-align:center;top:291.59px;font-size:8.6px;transform-origin:50% 0;transform:scaleX(0.88);color:#000;font-weight:normal">24</div>
<div class="t" style="left:528.40px;width:200px;text-align:center;top:291.59px;font-size:8.6px;transform-origin:50% 0;transform:scaleX(0.88);color:#000;font-weight:normal">27</div>
<div class="t" style="left:685.50px;top:291.59px;font-size:8.6px;transform:scaleX(0.9);color:#000;font-weight:normal;">30gB</div>
<div style="position:absolute;left:31px;top:312px;width:640px;height:2px;background:#606060;"></div>
<div style="position:absolute;left:166px;top:302px;width:2px;height:55px;background:#606060;"></div>
<div style="position:absolute;left:228px;top:302px;width:2px;height:55px;background:#606060;"></div>
<div class="t" style="left:187.80px;top:301.77px;font-size:9.6px;transform:scaleX(0.796875);color:#000;font-weight:normal;">Read</div>
<div class="t" style="left:251.60px;top:301.77px;font-size:9.6px;transform:scaleX(0.796875);color:#000;font-weight:normal;">Write</div>
<div class="t" style="left:34.00px;top:315.87px;font-size:9.6px;transform:scaleX(0.793125);color:#000;font-weight:normal;">Sequential</div>
<div class="t" style="left:33.00px;top:330.67px;font-size:9.6px;transform:scaleX(0.7903125);color:#000;font-weight:normal;">4 KB random single</div>
<div class="t" style="left:33.00px;top:345.37px;font-size:9.6px;transform:scaleX(0.7903125);color:#000;font-weight:normal;">4 KB random multi</div>
<div class="t" style="right:574.00px;top:315.67px;font-size:9.6px;transform-origin:100% 0;transform:scaleX(0.955);color:#000;font-weight:bold">95378 KB/s</div>
<div class="t" style="right:574.00px;top:330.47px;font-size:9.6px;transform-origin:100% 0;transform:scaleX(0.955);color:#000;font-weight:bold">1700 IOPS</div>
<div class="t" style="right:510.00px;top:315.67px;font-size:9.6px;transform-origin:100% 0;transform:scaleX(0.955);color:#000;font-weight:bold">50076 KB/s</div>
<div class="t" style="right:510.00px;top:330.47px;font-size:9.6px;transform-origin:100% 0;transform:scaleX(0.955);color:#000;font-weight:bold">234 IOPS</div>
<div style="position:absolute;left:115px;top:341px;width:26px;height:15px;box-sizing:border-box;border:1px solid #9a9a9a;background:#fff;"></div>
<div class="t" style="left:117.00px;top:342.17px;font-size:9.6px;transform:scaleX(0.84375);color:#000;font-weight:normal;">32</div>
<div style="position:absolute;left:129px;top:342px;width:11px;height:13px;background:#e6e6e6;border-left:1px solid #cfcfcf;box-sizing:border-box;"></div>
<svg width="12" height="14" style="left:129px;top:342px"><path d="M3.5 5 L6 2.5 L8.5 5 Z M3.5 8.5 L6 11 L8.5 8.5 Z" fill="#222"/></svg>
<div style="position:absolute;left:12px;top:362px;width:768px;height:1px;background:#a0a0a0;"></div>
<div style="position:absolute;left:34px;top:367px;width:10px;height:10px;box-sizing:border-box;border:1px solid #333;background:#fff;"></div>
<div class="t" style="left:45.60px;top:367.37px;font-size:9.6px;transform:scaleX(0.800625);color:#000;font-weight:normal;">Block size measurement</div>
<svg width="800" height="565" style="left:0;top:0">
<defs><linearGradient id="bg2" x1="0" y1="0" x2="0" y2="1"><stop offset="0" stop-color="#000"/><stop offset="1" stop-color="#4a4a4a"/></linearGradient></defs>
<rect x="24" y="390" width="684" height="144.5" fill="#000"/>
<rect x="25" y="391" width="681" height="141.5" fill="url(#bg2)"/>
<line x1="25" y1="518.50" x2="707" y2="518.50" stroke="rgba(255,255,255,0.16)" stroke-width="1"/>
<line x1="25" y1="504.50" x2="707" y2="504.50" stroke="rgba(255,255,255,0.34)" stroke-width="1"/>
<line x1="25" y1="490.50" x2="707" y2="490.50" stroke="rgba(255,255,255,0.16)" stroke-width="1"/>
<line x1="25" y1="476.50" x2="707" y2="476.50" stroke="rgba(255,255,255,0.34)" stroke-width="1"/>
<line x1="25" y1="462.50" x2="707" y2="462.50" stroke="rgba(255,255,255,0.16)" stroke-width="1"/>
<line x1="25" y1="447.50" x2="707" y2="447.50" stroke="rgba(255,255,255,0.34)" stroke-width="1"/>
<line x1="25" y1="433.50" x2="707" y2="433.50" stroke="rgba(255,255,255,0.16)" stroke-width="1"/>
<line x1="25" y1="419.50" x2="707" y2="419.50" stroke="rgba(255,255,255,0.34)" stroke-width="1"/>
<line x1="25" y1="405.50" x2="707" y2="405.50" stroke="rgba(255,255,255,0.16)" stroke-width="1"/>
<line x1="47.50" y1="391" x2="47.50" y2="533" stroke="#6e6e6e" stroke-width="1"/>
<line x1="47.50" y1="534.5" x2="47.50" y2="538" stroke="#aaa" stroke-width="1"/>
<line x1="92.50" y1="391" x2="92.50" y2="533" stroke="#6e6e6e" stroke-width="1"/>
<line x1="92.50" y1="534.5" x2="92.50" y2="538" stroke="#aaa" stroke-width="1"/>
<line x1="138.50" y1="391" x2="138.50" y2="533" stroke="#6e6e6e" stroke-width="1"/>
<line x1="138.50" y1="534.5" x2="138.50" y2="538" stroke="#aaa" stroke-width="1"/>
<line x1="183.50" y1="391" x2="183.50" y2="533" stroke="#6e6e6e" stroke-width="1"/>
<line x1="183.50" y1="534.5" x2="183.50" y2="538" stroke="#aaa" stroke-width="1"/>
<line x1="228.50" y1="391" x2="228.50" y2="533" stroke="#6e6e6e" stroke-width="1"/>
<line x1="228.50" y1="534.5" x2="228.50" y2="538" stroke="#aaa" stroke-width="1"/>
<line x1="274.50" y1="391" x2="274.50" y2="533" stroke="#6e6e6e" stroke-width="1"/>
<line x1="274.50" y1="534.5" x2="274.50" y2="538" stroke="#aaa" stroke-width="1"/>
<line x1="319.50" y1="391" x2="319.50" y2="533" stroke="#6e6e6e" stroke-width="1"/>
<line x1="319.50" y1="534.5" x2="319.50" y2="538" stroke="#aaa" stroke-width="1"/>
<line x1="365.50" y1="391" x2="365.50" y2="533" stroke="#6e6e6e" stroke-width="1"/>
<line x1="365.50" y1="534.5" x2="365.50" y2="538" stroke="#aaa" stroke-width="1"/>
<line x1="410.50" y1="391" x2="410.50" y2="533" stroke="#6e6e6e" stroke-width="1"/>
<line x1="410.50" y1="534.5" x2="410.50" y2="538" stroke="#aaa" stroke-width="1"/>
<line x1="455.50" y1="391" x2="455.50" y2="533" stroke="#6e6e6e" stroke-width="1"/>
<line x1="455.50" y1="534.5" x2="455.50" y2="538" stroke="#aaa" stroke-width="1"/>
<line x1="501.50" y1="391" x2="501.50" y2="533" stroke="#6e6e6e" stroke-width="1"/>
<line x1="501.50" y1="534.5" x2="501.50" y2="538" stroke="#aaa" stroke-width="1"/>
<line x1="546.50" y1="391" x2="546.50" y2="533" stroke="#6e6e6e" stroke-width="1"/>
<line x1="546.50" y1="534.5" x2="546.50" y2="538" stroke="#aaa" stroke-width="1"/>
<line x1="591.50" y1="391" x2="591.50" y2="533" stroke="#6e6e6e" stroke-width="1"/>
<line x1="591.50" y1="534.5" x2="591.50" y2="538" stroke="#aaa" stroke-width="1"/>
<line x1="637.50" y1="391" x2="637.50" y2="533" stroke="#6e6e6e" stroke-width="1"/>
<line x1="637.50" y1="534.5" x2="637.50" y2="538" stroke="#aaa" stroke-width="1"/>
<line x1="682.50" y1="391" x2="682.50" y2="533" stroke="#6e6e6e" stroke-width="1"/>
<line x1="682.50" y1="534.5" x2="682.50" y2="538" stroke="#aaa" stroke-width="1"/>
<line x1="22.5" y1="504.32" x2="24" y2="504.32" stroke="#ccc" stroke-width="1"/>
<line x1="22.5" y1="476.14" x2="24" y2="476.14" stroke="#ccc" stroke-width="1"/>
<line x1="22.5" y1="447.96" x2="24" y2="447.96" stroke="#ccc" stroke-width="1"/>
<line x1="22.5" y1="419.78" x2="24" y2="419.78" stroke="#ccc" stroke-width="1"/>
<line x1="22.5" y1="391.60" x2="24" y2="391.60" stroke="#ccc" stroke-width="1"/>
<rect x="660" y="382" width="6" height="6.5" fill="#1e9ad6"/>
<rect x="686.3" y="382" width="6.7" height="6.5" fill="#e07a10"/>
</svg>
<div class="t" style="left:25.00px;top:380.77px;font-size:8.8px;transform:scaleX(0.85);color:#000;font-weight:normal;">MB/s</div>
<div class="t" style="left:666.00px;top:380.99px;font-size:8.6px;transform:scaleX(0.95);color:#000;font-weight:normal;">read</div>
<div class="t" style="left:693.50px;top:380.99px;font-size:8.6px;transform:scaleX(0.98);color:#000;font-weight:normal;">write</div>
<div class="t" style="right:778.50px;top:500.21px;font-size:8.6px;transform-origin:100% 0;transform:scaleX(0.92);color:#000;font-weight:normal">5</div>
<div class="t" style="right:778.50px;top:472.03px;font-size:8.6px;transform-origin:100% 0;transform:scaleX(0.92);color:#000;font-weight:normal">10</div>
<div class="t" style="right:778.50px;top:443.85px;font-size:8.6px;transform-origin:100% 0;transform:scaleX(0.92);color:#000;font-weight:normal">15</div>
<div class="t" style="right:778.50px;top:415.67px;font-size:8.6px;transform-origin:100% 0;transform:scaleX(0.92);color:#000;font-weight:normal">20</div>
<div class="t" style="right:778.50px;top:387.49px;font-size:8.6px;transform-origin:100% 0;transform:scaleX(0.92);color:#000;font-weight:normal">25</div>
<div class="t" style="left:-52.50px;width:200px;text-align:center;top:538.79px;font-size:8.6px;transform-origin:50% 0;transform:scaleX(0.88);color:#000;font-weight:normal">0.5</div>
<div class="t" style="left:-7.14px;width:200px;text-align:center;top:538.79px;font-size:8.6px;transform-origin:50% 0;transform:scaleX(0.88);color:#000;font-weight:normal">1</div>
<div class="t" style="left:38.22px;width:200px;text-align:center;top:538.79px;font-size:8.6px;transform-origin:50% 0;transform:scaleX(0.88);color:#000;font-weight:normal">2</div>
<div class="t" style="left:83.58px;width:200px;text-align:center;top:538.79px;font-size:8.6px;transform-origin:50% 0;transform:scaleX(0.88);color:#000;font-weight:normal">4</div>
<div class="t" style="left:128.94px;width:200px;text-align:center;top:538.79px;font-size:8.6px;transform-origin:50% 0;transform:scaleX(0.88);color:#000;font-weight:normal">8</div>
<div class="t" style="left:174.30px;width:200px;text-align:center;top:538.79px;font-size:8.6px;transform-origin:50% 0;transform:scaleX(0.88);color:#000;font-weight:normal">16</div>
<div class="t" style="left:219.66px;width:200px;text-align:center;top:538.79px;font-size:8.6px;transform-origin:50% 0;transform:scaleX(0.88);color:#000;font-weight:normal">32</div>
<div class="t" style="left:265.02px;width:200px;text-align:center;top:538.79px;font-size:8.6px;transform-origin:50% 0;transform:scaleX(0.88);color:#000;font-weight:normal">64</div>
<div class="t" style="left:310.38px;width:200px;text-align:center;top:538.79px;font-size:8.6px;transform-origin:50% 0;transform:scaleX(0.88);color:#000;font-weight:normal">128</div>
<div class="t" style="left:355.74px;width:200px;text-align:center;top:538.79px;font-size:8.6px;transform-origin:50% 0;transform:scaleX(0.88);color:#000;font-weight:normal">256</div>
<div class="t" style="left:401.10px;width:200px;text-align:center;top:538.79px;font-size:8.6px;transform-origin:50% 0;transform:scaleX(0.88);color:#000;font-weight:normal">512</div>
<div class="t" style="left:446.46px;width:200px;text-align:center;top:538.79px;font-size:8.6px;transform-origin:50% 0;transform:scaleX(0.88);color:#000;font-weight:normal">1024</div>
<div class="t" style="left:491.82px;width:200px;text-align:center;top:538.79px;font-size:8.6px;transform-origin:50% 0;transform:scaleX(0.88);color:#000;font-weight:normal">2048</div>
<div class="t" style="left:537.18px;width:200px;text-align:center;top:538.79px;font-size:8.6px;transform-origin:50% 0;transform:scaleX(0.88);color:#000;font-weight:normal">4096</div>
<div class="t" style="left:582.54px;width:200px;text-align:center;top:538.79px;font-size:8.6px;transform-origin:50% 0;transform:scaleX(0.88);color:#000;font-weight:normal">8192</div>
<div style="position:absolute;left:728px;top:98px;width:54px;height:16px;box-sizing:border-box;border:2px solid #0078d7;background:#e1e1e1;"></div>
<div style="position:absolute;left:730px;top:100px;width:50px;height:12px;box-sizing:border-box;border:1px dotted #111;"></div>
<div class="t" style="left:746.00px;top:101.37px;font-size:9.6px;transform:scaleX(0.796875);color:#000;font-weight:normal;">Start</div>
<div class="t" style="left:727.00px;top:119.97px;font-size:9.6px;transform:scaleX(0.796875);color:#000;font-weight:normal;">Drive</div>
<div style="position:absolute;left:727px;top:133px;width:55px;height:15px;box-sizing:border-box;border:1px solid #bcbcbc;background:#e5e5e5;"></div>
<div class="t" style="left:729.50px;top:135.87px;font-size:9.6px;transform:scaleX(0.796875);color:#000;font-weight:normal;">J:</div>
<svg width="10" height="6" style="left:771px;top:139.3px"><path d="M1.5 1.2 L4.5 3.8 L7.5 1.2" fill="none" stroke="#444" stroke-width="0.9"/></svg>
<div class="t" style="left:727.00px;top:153.37px;font-size:9.6px;transform:scaleX(0.785625);color:#000;font-weight:normal;">File length</div>
<div style="position:absolute;left:727px;top:171px;width:41px;height:15px;box-sizing:border-box;border:1px solid #7a7a7a;background:#fff;"></div>
<div class="t" style="left:729.50px;top:173.87px;font-size:9.6px;transform:scaleX(0.796875);color:#000;font-weight:normal;">30000</div>
<div style="position:absolute;left:755px;top:172px;width:12px;height:13px;background:#e6e6e6;border-left:1px solid #cfcfcf;box-sizing:border-box;"></div>
<svg width="12" height="14" style="left:755px;top:172px"><path d="M3.5 5 L6 2.5 L8.5 5 Z M3.5 8.5 L6 11 L8.5 8.5 Z" fill="#222"/></svg>
<div class="t" style="left:769.00px;top:175.67px;font-size:9.6px;transform:scaleX(0.796875);color:#000;font-weight:normal;">MB</div>
<div class="t" style="left:727.00px;top:198.37px;font-size:9.6px;transform:scaleX(0.796875);color:#000;font-weight:normal;">Data pattern</div>
<div style="position:absolute;left:727px;top:212px;width:55px;height:16px;box-sizing:border-box;border:1px solid #bcbcbc;background:#e5e5e5;"></div>
<div class="t" style="left:729.50px;top:214.87px;font-size:9.6px;transform:scaleX(0.796875);color:#000;font-weight:normal;">Random</div>
<svg width="10" height="6" style="left:771px;top:218.3px"><path d="M1.5 1.2 L4.5 3.8 L7.5 1.2" fill="none" stroke="#444" stroke-width="0.9"/></svg>
<div class="t" style="left:728.60px;top:465.37px;font-size:9.6px;transform:scaleX(0.785625);color:#000;font-weight:normal;">File length</div>
<div style="position:absolute;left:727px;top:481px;width:55px;height:15px;box-sizing:border-box;border:1px solid #bcbcbc;background:#e5e5e5;"></div>
<div class="t" style="left:729.50px;top:483.87px;font-size:9.6px;transform:scaleX(0.796875);color:#000;font-weight:normal;">64 MB</div>
<svg width="10" height="6" style="left:771px;top:487.3px"><path d="M1.5 1.2 L4.5 3.8 L7.5 1.2" fill="none" stroke="#444" stroke-width="0.9"/></svg>
<div class="t" style="left:728.50px;top:505.17px;font-size:9.6px;transform:scaleX(0.796875);color:#000;font-weight:normal;">Delay</div>
<div style="position:absolute;left:728px;top:519px;width:40px;height:15px;box-sizing:border-box;border:1px solid #7a7a7a;background:#fff;"></div>
<div class="t" style="left:730.50px;top:521.87px;font-size:9.6px;transform:scaleX(0.796875);color:#000;font-weight:normal;">0</div>
<div style="position:absolute;left:771px;top:518px;width:11px;height:8px;box-sizing:border-box;border:1px solid #bdbdbd;background:#e8e8e8;"></div>
<div style="position:absolute;left:771px;top:527px;width:11px;height:8px;box-sizing:border-box;border:1px solid #bdbdbd;background:#e8e8e8;"></div>
<svg width="12" height="18" style="left:771px;top:518px"><path d="M3.5 5 L5.5 3 L7.5 5 Z M3.5 12 L5.5 14 L7.5 12 Z" fill="#111"/></svg>
<div class="t" style="left:680px;top:538.5px;font-size:19px;font-weight:bold;color:rgba(250,238,70,0.45);letter-spacing:3px;transform:scaleX(1.05);filter:blur(0.7px)">MY</div>
<div class="t" style="left:769px;top:525.5px;font-size:15px;font-weight:bold;color:rgba(250,240,60,0.55);filter:blur(0.4px)">.ru</div>
<div style="position:absolute;left:0px;top:0px;width:800px;height:1px;background:#3a3a3a;"></div>
<div style="position:absolute;left:0px;top:0px;width:1px;height:565px;background:#3a3a3a;"></div>
<div style="position:absolute;left:799px;top:0px;width:1px;height:565px;background:#3a3a3a;"></div>
<div style="position:absolute;left:0px;top:564px;width:800px;height:1px;background:#6a6a6a;"></div>
</body></html>
